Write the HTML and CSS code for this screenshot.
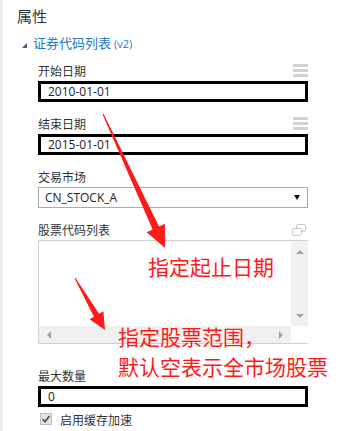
FILE: index.html
```html
<!DOCTYPE html>
<html lang="zh-CN">
<head>
    <meta charset="UTF-8">
    <title>属性</title>
    <link rel="stylesheet" href="styles.css">
</head>
<body>
    <div class="page">
        <div class="title">属性</div>
        <div class="group-head">
            <span class="caret"></span>
            <span class="group-name">证券代码列表</span>
            <span class="version">(v2)</span>
        </div>

        <div class="fields">
            <div class="field">
                <div class="label-row">
                    <label for="startDate">开始日期</label>
                    <span class="menu-icon"><i></i><i></i><i></i></span>
                </div>
                <input class="text-input" id="startDate" type="text" value="2010-01-01">
            </div>

            <div class="field">
                <div class="label-row">
                    <label for="endDate">结束日期</label>
                    <span class="menu-icon"><i></i><i></i><i></i></span>
                </div>
                <input class="text-input" id="endDate" type="text" value="2015-01-01">
            </div>

            <div class="field">
                <div class="label-row">
                    <label>交易市场</label>
                </div>
                <div class="select-box">
                    <span>CN_STOCK_A</span>
                    <span class="select-arrow"></span>
                </div>
            </div>

            <div class="field field-list">
                <div class="label-row">
                    <label>股票代码列表</label>
                    <svg class="copy-icon" width="14" height="12" viewBox="0 0 14 12">
                        <rect x="4.5" y="0.5" width="9" height="7" rx="1.5" fill="#fff" stroke="#c8c8c8"/>
                        <rect x="0.5" y="4.5" width="9" height="7" rx="1.5" fill="#fff" stroke="#c8c8c8"/>
                    </svg>
                </div>
                <div class="list-box">
                    <div class="list-area"></div>
                    <div class="vbar"><span class="arr-up"></span><span class="arr-down"></span></div>
                    <div class="hbar"><span class="arr-left"></span><span class="arr-right"></span></div>
                    <div class="corner"></div>
                </div>
            </div>

            <div class="field field-last">
                <div class="label-row">
                    <label for="maxCount">最大数量</label>
                </div>
                <input class="text-input" id="maxCount" type="text" value="0">
            </div>

            <div class="check-row">
                <span class="check-box">
                    <svg width="10" height="10" viewBox="0 0 10 10">
                        <path d="M1.5 5.2 L4 7.6 L8.6 2" fill="none" stroke="#555" stroke-width="1.8"/>
                    </svg>
                </span>
                <span>启用缓存加速</span>
            </div>
        </div>

        <!-- red notes drawn over the panel -->
        <svg class="marks" width="342" height="431" viewBox="0 0 342 431">
            <polygon points="103.5,113.7 159,226.5 164.9,223.8 165,248 146.7,232.2 152.6,229.5 102.5,114.3" fill="#ff1a1a"/>
            <polygon points="75.4,277.8 99.1,313.8 103.4,311.3 105,330 89.6,319.3 93.9,316.8 74.6,278.3" fill="#ff1a1a"/>
        </svg>
        <div class="note note-dates">指定起止日期</div>
        <div class="note note-codes">指定股票范围，<br>默认空表示全市场股票</div>
    </div>
</body>
</html>
```

FILE: styles.css
```css
body {
    margin: 0;
    background-color: #fff;
    font-family: "Open Sans", "Noto Sans CJK SC", sans-serif;
    color: #333;
}

.page {
    position: relative;
    height: 431px;
    overflow: hidden;
    background: linear-gradient(to right, #ececec 3px, #fff 3px);
}

.title {
    padding: 6px 0 0 17px;
    font-family: "Noto Sans CJK SC", sans-serif;
    font-size: 15px;
    line-height: 20px;
}

.group-head {
    display: flex;
    align-items: baseline;
    height: 20px;
    line-height: 20px;
    margin-top: 7px;
    padding-left: 22px;
}

.caret {
    align-self: center;
    width: 0;
    height: 0;
    margin-top: 4px;
    border-left: 5px solid transparent;
    border-bottom: 5px solid #3b5f86;
}

.group-name {
    margin-left: 6px;
    color: #2378c4;
    font-family: "Noto Sans CJK SC", sans-serif;
    font-size: 13px;
}

.version {
    margin-left: 3px;
    color: #2378c4;
    font-size: 11px;
}

.fields {
    margin-top: 9px;
    padding-left: 38px;
    width: 270px;
}

.field {
    margin-bottom: 13px;
}

.label-row {
    display: flex;
    justify-content: space-between;
    align-items: center;
    height: 17px;
    margin-bottom: 2px;
    font-family: "Noto Sans CJK SC", sans-serif;
    font-size: 12px;
}

.menu-icon {
    display: flex;
    flex-direction: column;
    gap: 2px;
    width: 15px;
}

.menu-icon i {
    display: block;
    height: 3px;
    background-color: #d2d2d2;
}

.copy-icon {
    margin-right: 2px;
}

.text-input {
    display: block;
    width: 270px;
    height: 21px;
    box-sizing: border-box;
    border: 3px solid #000;
    padding: 0 7px;
    font-family: "Open Sans", sans-serif;
    font-size: 12px;
    color: #222;
    outline: none;
}

.select-box {
    display: flex;
    justify-content: space-between;
    align-items: center;
    height: 21px;
    box-sizing: border-box;
    border: 1px solid #aaa;
    padding: 0 7px 0 6px;
    font-size: 12px;
    color: #222;
}

.select-arrow {
    width: 0;
    height: 0;
    border-left: 3.5px solid transparent;
    border-right: 3.5px solid transparent;
    border-top: 5px solid #111;
}

.field-list {
    margin-bottom: 23px;
}

.list-box {
    display: grid;
    grid-template-columns: 1fr 17px;
    grid-template-rows: 1fr 17px;
    height: 104px;
    box-sizing: border-box;
    border-top: 1px solid #d0d0d0;
    border-left: 1px solid #d0d0d0;
    border-bottom: 1px solid #d0d0d0;
}

.vbar {
    display: flex;
    flex-direction: column;
    justify-content: space-between;
    align-items: center;
    padding: 9px 0 8px;
    background-color: #f0f0f0;
}

.hbar {
    display: flex;
    justify-content: space-between;
    align-items: center;
    padding: 0 8px;
    background-color: #f0f0f0;
}

.arr-up, .arr-down, .arr-left, .arr-right {
    width: 0;
    height: 0;
}

.arr-up {
    border-left: 4px solid transparent;
    border-right: 4px solid transparent;
    border-bottom: 4px solid #a3a3a3;
}

.arr-down {
    border-left: 4px solid transparent;
    border-right: 4px solid transparent;
    border-top: 4px solid #a3a3a3;
}

.arr-left {
    border-top: 4px solid transparent;
    border-bottom: 4px solid transparent;
    border-right: 4px solid #a3a3a3;
}

.arr-right {
    border-top: 4px solid transparent;
    border-bottom: 4px solid transparent;
    border-left: 4px solid #a3a3a3;
}

.field-last {
    margin-bottom: 5px;
}

.check-row {
    display: flex;
    align-items: center;
    gap: 8px;
    height: 14px;
    padding-left: 2px;
    font-family: "Noto Sans CJK SC", sans-serif;
    font-size: 12px;
}

.check-box {
    display: flex;
    width: 10px;
    height: 10px;
    border: 1px solid #bdbdbd;
    background-color: #e4e4e4;
}

.marks {
    position: absolute;
    left: 0;
    top: 0;
}

.note {
    position: absolute;
    color: #ff1a1a;
    font-family: "Noto Sans CJK SC", sans-serif;
    font-size: 21px;
    white-space: nowrap;
}

.note-dates {
    left: 148px;
    top: 252px;
    line-height: 28px;
}

.note-codes {
    left: 118px;
    top: 321px;
    line-height: 30px;
}
```
